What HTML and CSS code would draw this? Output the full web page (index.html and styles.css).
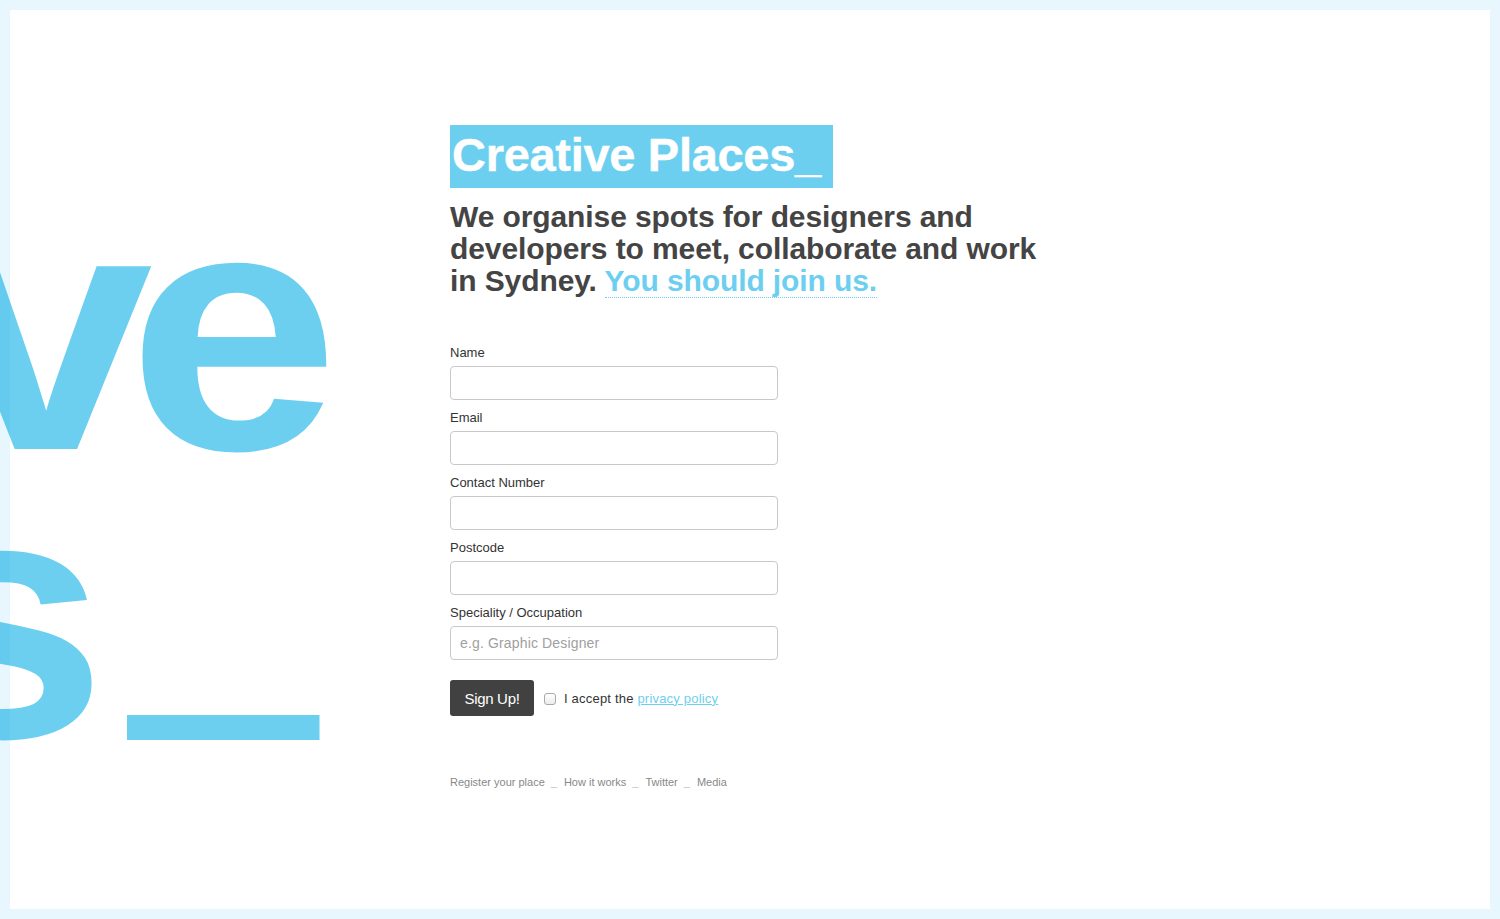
FILE: index.html
```html
<!DOCTYPE html>
<html lang="en">
<head>
<meta charset="utf-8">
<title>Creative Places_</title>
<link rel="stylesheet" href="styles.css">
</head>
<body>
<div class="frame"></div>
<div class="backdrop" aria-hidden="true">Creative<br>Places<span class="bar"></span></div>
<main class="content">
  <h1 class="title">Creative Places_</h1>
  <p class="lede">We organise spots for designers and developers to meet, collaborate and work in Sydney. <a class="join" href="#">You should join us.</a></p>
  <form class="signup">
    <div class="field">
      <label for="name">Name</label>
      <input id="name" type="text">
    </div>
    <div class="field">
      <label for="email">Email</label>
      <input id="email" type="email">
    </div>
    <div class="field">
      <label for="phone">Contact Number</label>
      <input id="phone" type="text">
    </div>
    <div class="field">
      <label for="postcode">Postcode</label>
      <input id="postcode" type="text">
    </div>
    <div class="field">
      <label for="job">Speciality / Occupation</label>
      <input id="job" type="text" placeholder="e.g. Graphic Designer">
    </div>
    <div class="actions">
      <button type="button" class="btn">Sign Up!</button>
      <input type="checkbox" id="accept" class="check">
      <label for="accept" class="accept">I accept the <a href="#">privacy policy</a></label>
    </div>
  </form>
  <nav class="footer">
    <a href="#">Register your place</a><span class="sep">_</span><a href="#">How it works</a><span class="sep">_</span><a href="#">Twitter</a><span class="sep">_</span><a href="#">Media</a>
  </nav>
</main>
</body>
</html>
```
FILE: styles.css
```css
html, body {
  margin: 0;
  height: 100%;
  overflow: hidden;
  background: #fff;
}
body {
  position: relative;
  font-family: "Liberation Sans", Arial, sans-serif;
  color: #333;
}
.frame {
  position: fixed;
  inset: 0;
  border: 10px solid rgba(25, 175, 235, 0.1);
  pointer-events: none;
  z-index: 5;
}
.backdrop {
  position: absolute;
  top: 185px;
  left: -1000px;
  width: 1314px;
  text-align: right;
  white-space: nowrap;
  font-size: 346px;
  line-height: 288px;
  font-weight: bold;
  letter-spacing: -23px;
  color: #6dcff0;
  transform: scaleX(1.1);
  transform-origin: right center;
  z-index: 0;
}
.backdrop .bar {
  display: inline-block;
  width: 175px;
  height: 25px;
  background: #6dcff0;
  margin-left: 41px;
  margin-right: -5px;
  vertical-align: -3px;
}
.content {
  position: relative;
  z-index: 1;
  padding: 125px 0 0 450px;
}
.title {
  display: inline-block;
  margin: 0;
  padding: 2px 12px 5px 2px;
  background: #6dcff0;
  color: #fff;
  font-size: 47px;
  line-height: 56px;
  font-weight: bold;
  letter-spacing: -0.3px;
  -webkit-text-stroke: 0.4px #fff;
}
.lede {
  margin: 13px 0 0;
  max-width: 600px;
  font-size: 30px;
  line-height: 32px;
  font-weight: bold;
  color: #444;
  letter-spacing: -0.1px;
}
.join {
  color: #6dcff0;
  text-decoration: none;
  border-bottom: 1px dotted #6dcff0;
}
.signup {
  margin-top: 45px;
  width: 328px;
}
.field + .field {
  margin-top: 7px;
}
.field label {
  display: block;
  font-size: 13px;
  line-height: 20px;
  padding-top: 1px;
  margin-bottom: 3px;
  color: #333;
}
.field input {
  display: block;
  box-sizing: border-box;
  width: 328px;
  height: 34px;
  margin: 0;
  padding: 0 9px;
  border: 1px solid #c8c8c8;
  border-radius: 4px;
  font-family: inherit;
  font-size: 14px;
  letter-spacing: 0.15px;
  color: #333;
  background: #fff;
}
.field input::placeholder {
  color: #a0a0a0;
}
.actions {
  display: flex;
  align-items: center;
  margin-top: 20px;
  white-space: nowrap;
}
.btn {
  box-sizing: border-box;
  width: 84px;
  height: 36px;
  padding: 0;
  border: 0;
  border-radius: 3px;
  background: #414141;
  color: #fff;
  font-family: inherit;
  font-size: 15px;
  letter-spacing: -0.3px;
}
.check {
  appearance: none;
  -webkit-appearance: none;
  box-sizing: border-box;
  width: 12px;
  height: 12px;
  margin: 1px 8px 0 10px;
  border: 1px solid #a9a9a9;
  border-radius: 3px;
  background: linear-gradient(#fff, #ececec);
}
.accept {
  font-size: 13px;
  letter-spacing: 0.2px;
  color: #333;
}
.accept a {
  color: #6dcff0;
  text-decoration: underline;
}
.footer {
  margin-top: 59px;
  font-size: 11px;
  line-height: 14px;
  color: #888;
}
.footer a {
  color: #888;
  text-decoration: none;
}
.footer .sep {
  margin: 0 7px 0 6px;
  color: #c4c4c4;
}
```
